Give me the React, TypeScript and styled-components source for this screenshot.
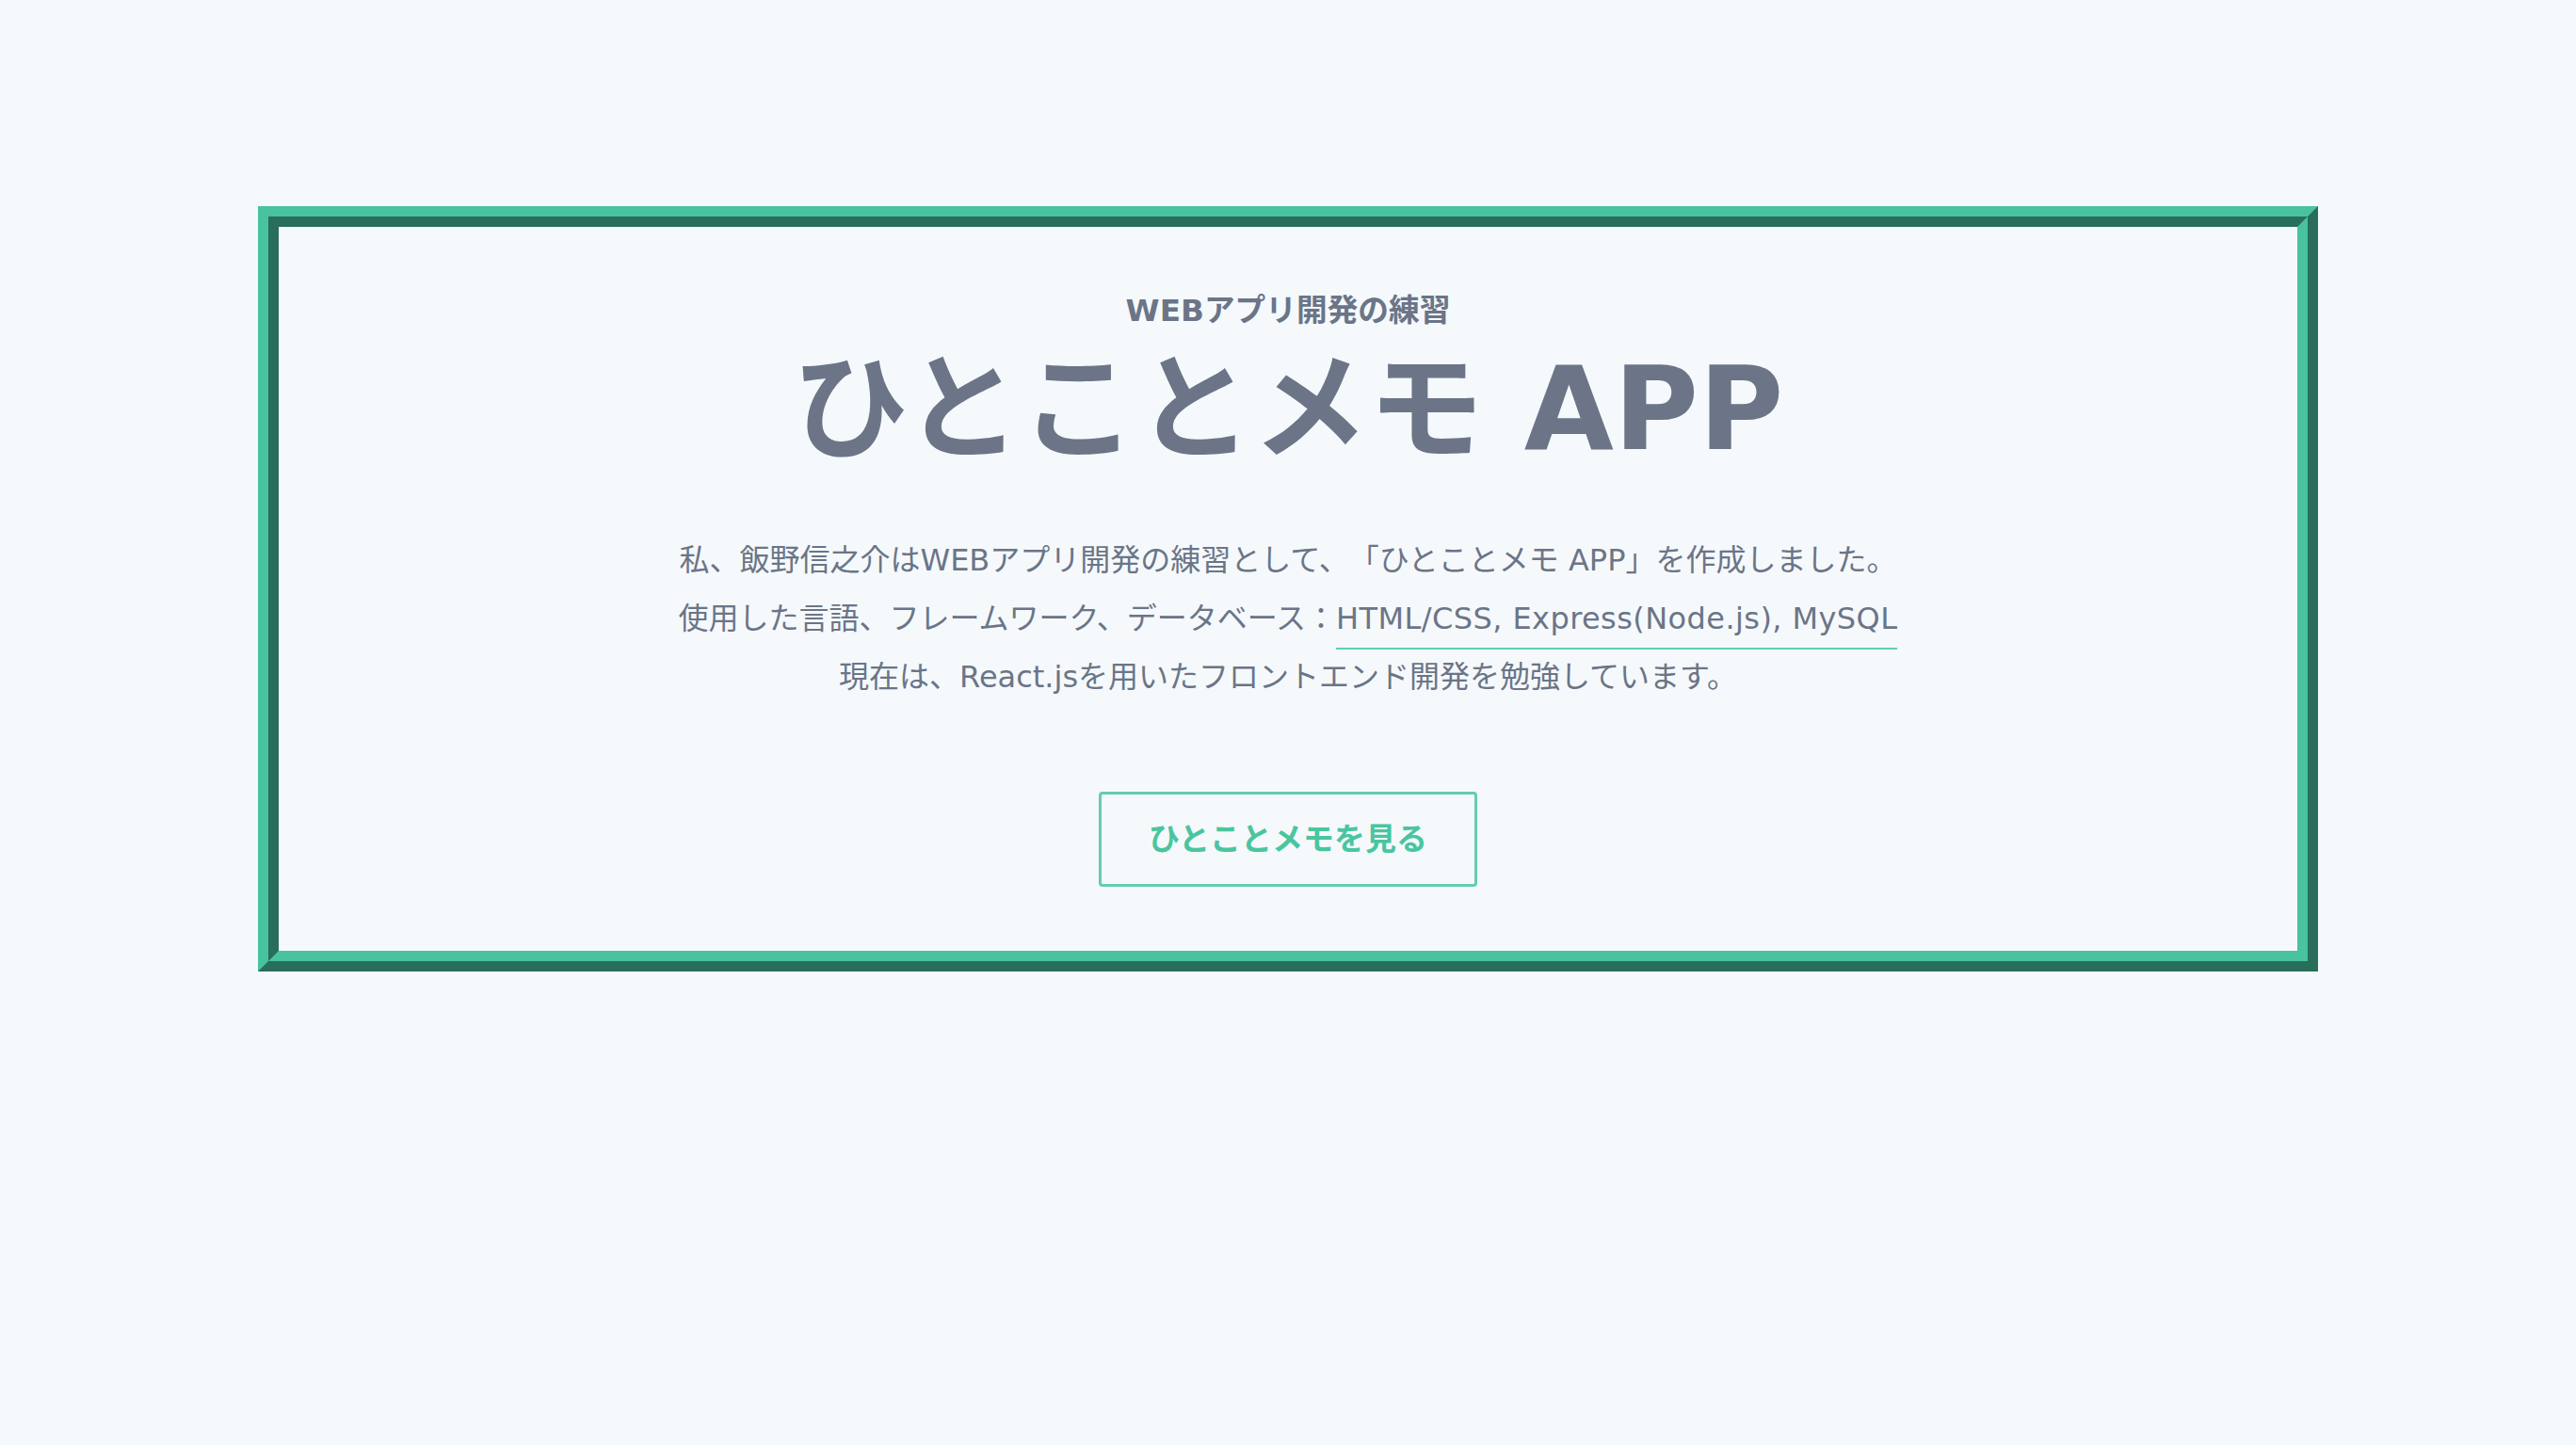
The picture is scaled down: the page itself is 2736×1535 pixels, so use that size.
import React from "react";
import styled, { createGlobalStyle } from "styled-components";

const GlobalStyle = createGlobalStyle`
  html, body {
    margin: 0;
    padding: 0;
    background: #f5f9fc;
  }
  body {
    font-family: "DejaVu Sans", "Noto Sans CJK JP", sans-serif;
    color: #6b7587;
    text-spacing-trim: space-all;
  }
  #root {
    min-height: 100vh;
  }
`;

const Page = styled.main`
  min-height: 100vh;
  box-sizing: border-box;
  padding-top: 219px;
  display: flex;
  flex-direction: column;
  align-items: center;
`;

const Frame = styled.section`
  box-sizing: border-box;
  width: 80%;
  border: 22px ridge #48c29f;
  padding: 69px 40px 68px;
  display: flex;
  flex-direction: column;
  align-items: center;
  text-align: center;
`;

const Kicker = styled.p`
  margin: 0;
  font-size: 32.7px;
  line-height: 40px;
  font-weight: 700;
  color: #6b7587;
`;

const Title = styled.h1`
  margin: 12px 0 0;
  font-size: 123px;
  line-height: 146px;
  font-weight: 700;
  color: #6b7587;
`;

const Intro = styled.p`
  margin: 55.5px 0 0;
  font-size: 32px;
  line-height: 62px;
  font-weight: 400;
  color: #6b7587;
`;

const Stack = styled.span`
  letter-spacing: 0.42px;
  padding-bottom: 12px;
  border-bottom: 2px solid #5fcfb4;
`;

const ViewButton = styled.button`
  margin-top: 91.5px;
  box-sizing: border-box;
  height: 101px;
  padding: 0 49.5px;
  border: 3px solid #68cbb0;
  border-radius: 4px;
  background: transparent;
  font-family: "DejaVu Sans", "Noto Sans CJK JP", sans-serif;
  font-size: 33px;
  line-height: 40px;
  font-weight: 700;
  color: #4ac59f;
  cursor: pointer;
`;

export default function App() {
  return (
    <>
      <GlobalStyle />
      <Page>
        <Frame>
          <Kicker>WEBアプリ開発の練習</Kicker>
          <Title>ひとことメモ APP</Title>
          <Intro>
            私、飯野信之介はWEBアプリ開発の練習として、「ひとことメモ APP」を作成しました。
            <br />
            使用した言語、フレームワーク、データベース：
            <Stack>HTML/CSS, Express(Node.js), MySQL</Stack>
            <br />
            現在は、React.jsを用いたフロントエンド開発を勉強しています。
          </Intro>
          <ViewButton type="button">ひとことメモを見る</ViewButton>
        </Frame>
      </Page>
    </>
  );
}
